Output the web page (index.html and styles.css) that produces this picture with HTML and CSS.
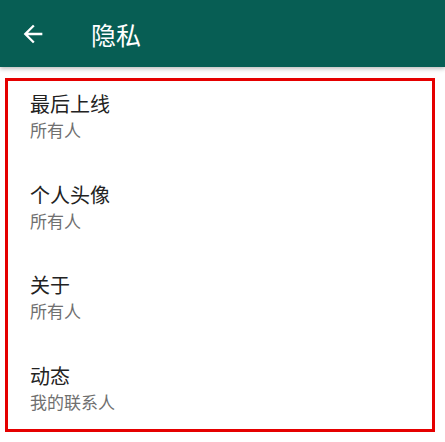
FILE: index.html
```html
<!DOCTYPE html>
<html lang="zh-CN">
<head>
<meta charset="utf-8">
<title>隐私</title>
<link rel="stylesheet" href="styles.css">
</head>
<body>
<header class="appbar">
  <svg class="back" width="28" height="28" viewBox="0 0 24 24" aria-hidden="true">
    <path d="M20 11H7.83l5.59-5.59L12 4l-8 8 8 8 1.41-1.41L7.83 13H20v-2z" fill="#ffffff"/>
  </svg>
  <h1 class="title">隐私</h1>
</header>
<main class="list">
  <div class="row">
    <div class="row-title">最后上线</div>
    <div class="row-sub">所有人</div>
  </div>
  <div class="row">
    <div class="row-title">个人头像</div>
    <div class="row-sub">所有人</div>
  </div>
  <div class="row">
    <div class="row-title">关于</div>
    <div class="row-sub">所有人</div>
  </div>
  <div class="row">
    <div class="row-title">动态</div>
    <div class="row-sub">我的联系人</div>
  </div>
</main>
</body>
</html>
```
FILE: styles.css
```css
html, body {
  margin: 0;
  padding: 0;
  background: #ffffff;
  font-family: "Noto Sans CJK SC", "Noto Sans", sans-serif;
}

.appbar {
  height: 67px;
  background: #075e54;
  display: flex;
  align-items: center;
  padding-left: 19px;
  box-shadow: 0 2px 4px rgba(0, 0, 0, 0.25);
}

.back {
  display: block;
  flex: none;
}

.title {
  margin: 0 0 0 44px;
  color: #ffffff;
  font-size: 25px;
  font-weight: 400;
  line-height: 32px;
}

.list {
  box-sizing: border-box;
  margin: 11px 10px 0 5px;
  height: 354px;
  border: 3px solid #e50000;
  overflow: hidden;
}

.row {
  box-sizing: border-box;
  height: 90.5px;
  padding: 9px 22px 0;
}

.row-title {
  font-size: 20px;
  line-height: 28px;
  color: #222222;
}

.row-sub {
  font-size: 17px;
  line-height: 24px;
  color: #6f6f6f;
}
```
